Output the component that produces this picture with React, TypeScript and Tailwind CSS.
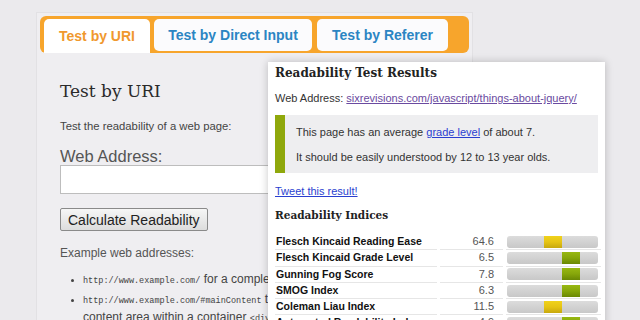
import React from 'react';

interface IndexRow {
  label: string;
  value: string;
  segment: number;
  tone: 'yellow' | 'green';
}

const rows: IndexRow[] = [
  { label: 'Flesch Kincaid Reading Ease', value: '64.6', segment: 2, tone: 'yellow' },
  { label: 'Flesch Kincaid Grade Level', value: '6.5', segment: 3, tone: 'green' },
  { label: 'Gunning Fog Score', value: '7.8', segment: 3, tone: 'green' },
  { label: 'SMOG Index', value: '6.3', segment: 3, tone: 'green' },
  { label: 'Coleman Liau Index', value: '11.5', segment: 2, tone: 'yellow' },
  { label: 'Automated Readability Index', value: '4.9', segment: 3, tone: 'green' }
];

function ScoreBar({ segment, tone }: { segment: number; tone: 'yellow' | 'green' }) {
  return (
    <div className="relative h-[12px] w-[91px] rounded-[3px] bg-gradient-to-b from-[#dcdcdc] to-[#c8c8c8] overflow-hidden">
      <div
        className={`absolute top-0 h-full w-[18px] bg-gradient-to-b ${
          tone === 'yellow' ? 'from-[#f0d21c] via-[#e6c414] to-[#c7a80e]' : 'from-[#98b812] via-[#86a60a] to-[#6a8804]'
        }`}
        style={{ left: segment * 18.4 }}
      />
    </div>
  );
}

export default function App() {
  return (
    <div className="relative w-[640px] h-[320px] overflow-hidden bg-[#ebeaed] font-['Liberation_Sans',Arial,sans-serif]">
      {/* main panel */}
      <div className="ml-[36px] mt-[12px] w-[437px] h-[320px] bg-[#efeef1] border-l border-t border-r border-[#e2e1e4] pt-[3px] px-[3px]">
        <div className="h-[37px] rounded-[6px] bg-[#f7a52c] flex items-end gap-[4px] pl-[4px]">
          <div className="w-[106px] h-[34px] bg-white rounded-t-[5px] flex items-center justify-center text-[14px] font-bold text-[#f0982e]">
            Test by URI
          </div>
          <div className="w-[158px] h-[32px] mb-[2px] bg-[#fbfbfd] rounded-[5px] flex items-center justify-center text-[14px] font-bold text-[#2b85c3]">
            Test by Direct Input
          </div>
          <div className="w-[131px] h-[32px] mb-[2px] ml-[1px] bg-[#fbfbfd] rounded-[5px] flex items-center justify-center text-[14px] font-bold text-[#2b85c3]">
            Test by Referer
          </div>
        </div>

        <div className="pl-[20px] text-[#444]">
          <h2 className="mt-[27px] text-[17px] leading-[22px] text-[#2a2a2a] font-['DejaVu_Serif',serif]">Test by URI</h2>
          <p className="mt-[17px] text-[11.3px] leading-[14px]">Test the readability of a web page:</p>
          <label className="block mt-[14px] text-[16.5px] leading-[18px] text-[#555]">Web Address:</label>
          <div className="w-[260px] h-[29px] bg-white border border-[#bdbdbd]" />
          <button className="mt-[14px] h-[23px] px-[7px] text-[14px] leading-[20px] text-[#222] bg-gradient-to-b from-[#f6f6f6] to-[#dddddd] border border-[#8a8a8a] rounded-[2px]">
            Calculate Readability
          </button>
          <p className="mt-[13px] text-[12px] leading-[16px] text-[#555]">Example web addresses:</p>
          <ul className="mt-[10px] pl-[23px] list-disc text-[12px] leading-[16px] text-[#444] marker:text-[9px]">
            <li className="mb-[2px]">
              <span className="font-['Liberation_Mono',monospace] text-[8.5px]">http://www.example.com/</span> for a complete web page
            </li>
            <li>
              <span className="font-['Liberation_Mono',monospace] text-[8.5px]">http://www.example.com/#mainContent</span> to test only the main
              <br />
              content area within a container{' '}
              <span className="font-['Liberation_Mono',monospace] text-[8.5px]">&lt;div id="mainContent"&gt;</span>
            </li>
          </ul>
        </div>
      </div>

      {/* results card */}
      <div className="absolute left-[268px] top-[62px] w-[337px] h-[280px] bg-white shadow-[0_0_8px_rgba(0,0,0,0.22)] px-[7px] pt-[3px] text-[#333]">
        <h3 className="text-[12px] leading-[16px] font-bold font-['DejaVu_Serif',serif] text-[#222]">Readability Test Results</h3>
        <p className="mt-[10px] text-[11px] leading-[14px]">
          Web Address: <span className="underline text-[#6a4aa0]">sixrevisions.com/javascript/things-about-jquery/</span>
        </p>
        <div className="mt-[10px] flex h-[58px] bg-[#eeeef0]">
          <div className="w-[10px] bg-[#8fa80c]" />
          <div className="pl-[11px] pt-[10px] text-[11px] leading-[14px]">
            <p>
              This page has an average <span className="underline text-[#2a3fd0]">grade level</span> of about 7.
            </p>
            <p className="mt-[11px]">It should be easily understood by 12 to 13 year olds.</p>
          </div>
        </div>
        <p className="mt-[11px] text-[11px] leading-[14px] underline text-[#2a3fd0]">Tweet this result!</p>
        <h4 className="mt-[10px] text-[10.5px] leading-[14px] font-bold font-['DejaVu_Serif',serif] text-[#222]">Readability Indices</h4>
        <div className="mt-[12px] grid grid-cols-[162px_63px_95px] gap-x-[3px]">
          {rows.map((r) => (
            <React.Fragment key={r.label}>
              <div className="h-[16.3px] border-b border-[#e6e6e6] pl-[1px] text-[10.5px] leading-[15px] font-bold text-[#111]">{r.label}</div>
              <div className="h-[16.3px] border-b border-[#e6e6e6] pr-[9px] text-right text-[11px] leading-[15px] text-[#555]">{r.value}</div>
              <div className="h-[16.3px] border-b border-[#e6e6e6] flex items-center pl-[1px]">
                <ScoreBar segment={r.segment} tone={r.tone} />
              </div>
            </React.Fragment>
          ))}
        </div>
      </div>
    </div>
  );
}
